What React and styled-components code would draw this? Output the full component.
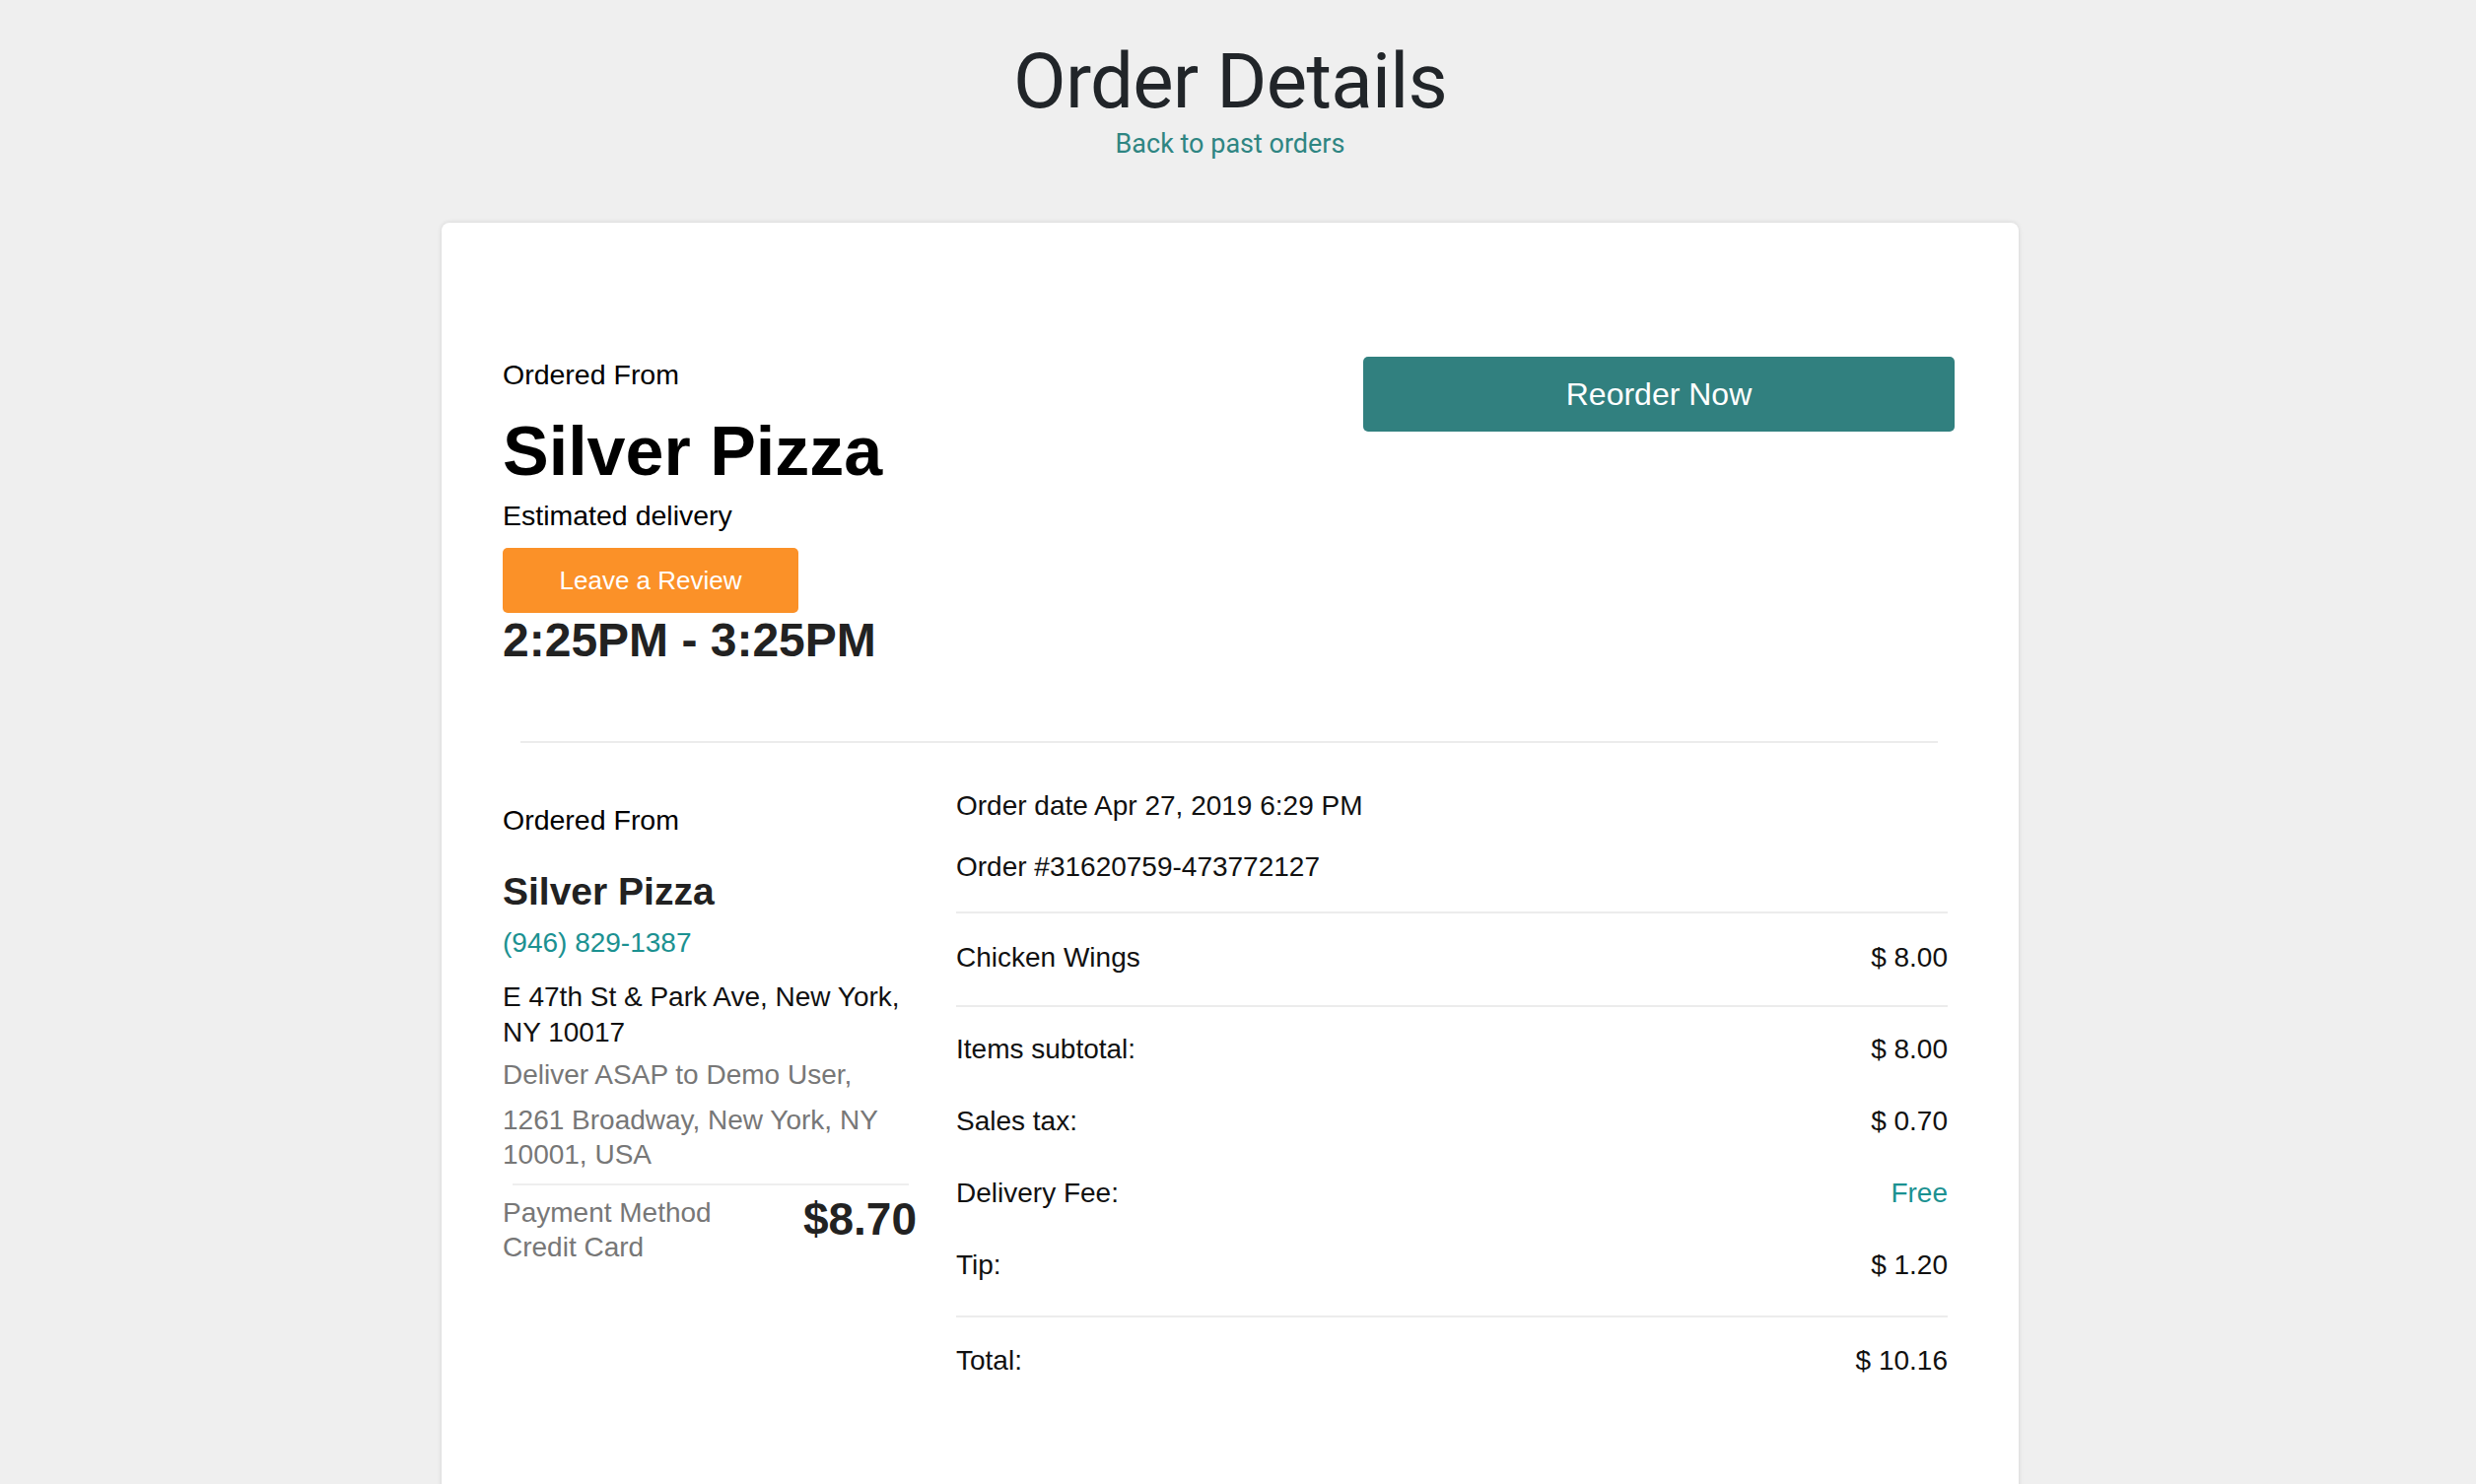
import React from 'react'
import styled, { createGlobalStyle } from 'styled-components'

const GlobalStyle = createGlobalStyle`
  body {
    margin: 0;
    background: #efefef;
    font-family: "Liberation Sans", Arial, sans-serif;
  }
`;

const summary = [
  { label: 'Items subtotal:', value: '$ 8.00' },
  { label: 'Sales tax:', value: '$ 0.70' },
  { label: 'Delivery Fee:', value: 'Free', free: true },
  { label: 'Tip:', value: '$ 1.20' },
];

export default function App() {
  return (
    <Page>
      <GlobalStyle />
      <Header>
        <Title>Order Details</Title>
        <BackLink href="#">Back to past orders</BackLink>
      </Header>
      <Card>
        <TopRow>
          <RestaurantInfo>
            <Label>Ordered From</Label>
            <RestaurantName>Silver Pizza</RestaurantName>
            <Label>Estimated delivery</Label>
            <ReviewButton>Leave a Review</ReviewButton>
            <DeliveryWindow>2:25PM - 3:25PM</DeliveryWindow>
          </RestaurantInfo>
          <ReorderButton>Reorder Now</ReorderButton>
        </TopRow>
        <Divider />
        <Details>
          <InfoColumn>
            <Label>Ordered From</Label>
            <SubName>Silver Pizza</SubName>
            <Phone>(946) 829-1387</Phone>
            <Address>E 47th St &amp; Park Ave, New York, NY 10017</Address>
            <Muted>Deliver ASAP to Demo User,</Muted>
            <MutedAddress>1261 Broadway, New York, NY 10001, USA</MutedAddress>
            <PaymentRule />
            <PaymentRow>
              <PaymentMethod>
                Payment Method
                <br />
                Credit Card
              </PaymentMethod>
              <PaymentTotal>$8.70</PaymentTotal>
            </PaymentRow>
          </InfoColumn>
          <ReceiptColumn>
            <MetaLine>Order date Apr 27, 2019 6:29 PM</MetaLine>
            <MetaLine>Order #31620759-473772127</MetaLine>
            <ItemRow>
              <span>Chicken Wings</span>
              <span>$ 8.00</span>
            </ItemRow>
            <Summary>
              {summary.map((row) => (
                <SummaryRow key={row.label}>
                  <span>{row.label}</span>
                  <Amount $free={row.free}>{row.value}</Amount>
                </SummaryRow>
              ))}
            </Summary>
            <TotalRow>
              <span>Total:</span>
              <span>$ 10.16</span>
            </TotalRow>
          </ReceiptColumn>
        </Details>
      </Card>
    </Page>
  )
}

const Page = styled.div`
  padding: 0 16px 0 0;
  min-height: 1506px;
  box-sizing: border-box;
`;

const Header = styled.header`
  display: flex;
  flex-direction: column;
  align-items: center;
  padding-top: 43px;
  margin-bottom: 64px;
  font-family: Roboto, "Liberation Sans", sans-serif;
`;

const Title = styled.h1`
  margin: 0;
  font-size: 78px;
  line-height: 80px;
  font-weight: 400;
  letter-spacing: -0.7px;
  color: #212529;
`;

const BackLink = styled.a`
  margin-top: 7px;
  font-size: 27px;
  line-height: 32px;
  color: #2e8582;
  text-decoration: none;
`;

const Card = styled.div`
  width: 1600px;
  margin: 0 auto;
  box-sizing: border-box;
  background: #fff;
  border-radius: 8px;
  box-shadow: 0 0 5px rgba(0, 0, 0, 0.12);
  padding: 136px 65px 120px 62px;
`;

const TopRow = styled.div`
  display: flex;
  justify-content: space-between;
  align-items: flex-start;
`;

const RestaurantInfo = styled.div`
  display: flex;
  flex-direction: column;
  align-items: flex-start;
  padding-top: 1px;
`;

const Label = styled.div`
  font-size: 28.5px;
  line-height: 34px;
  color: #000;
`;

const RestaurantName = styled.h2`
  margin: 21px 0 8px;
  font-size: 70px;
  line-height: 80px;
  font-weight: 700;
  color: #000;
`;

const ReviewButton = styled.button`
  margin-top: 16px;
  width: 300px;
  height: 66px;
  border: none;
  border-radius: 5px;
  background: #fb9128;
  color: #fff;
  font-family: inherit;
  font-size: 26px;
`;

const DeliveryWindow = styled.div`
  font-size: 48px;
  line-height: 56px;
  font-weight: 700;
  color: #222;
`;

const ReorderButton = styled.button`
  width: 600px;
  height: 76px;
  border: none;
  border-radius: 5px;
  background: #31807f;
  color: #fff;
  font-family: inherit;
  font-size: 32px;
`;

const Divider = styled.hr`
  margin: 74px 17px 0 18px;
  border: none;
  border-top: 2px solid #ececec;
`;

const Details = styled.div`
  display: flex;
  gap: 40px;
  align-items: flex-start;
`;

const InfoColumn = styled.div`
  width: 420px;
  flex-shrink: 0;
  padding-top: 61px;
`;

const SubName = styled.h3`
  margin: 33px 0 0;
  font-size: 39px;
  line-height: 46px;
  font-weight: 700;
  color: #222;
`;

const Phone = styled.div`
  margin-top: 12px;
  font-size: 28px;
  line-height: 34px;
  color: #1b9191;
`;

const Address = styled.div`
  margin-top: 20px;
  font-size: 28px;
  line-height: 36px;
  color: #111;
`;

const Muted = styled.div`
  margin-top: 7px;
  font-size: 28px;
  line-height: 36px;
  color: #777;
`;

const MutedAddress = styled(Muted)`
  margin-top: 10px;
  line-height: 35px;
`;

const PaymentRule = styled.hr`
  margin: 12px 8px 0 10px;
  border: none;
  border-top: 2px solid #eeeeee;
`;

const PaymentRow = styled.div`
  padding-top: 10px;
  display: flex;
  justify-content: space-between;
  align-items: flex-start;
`;

const PaymentMethod = styled.div`
  font-size: 28px;
  line-height: 35px;
  color: #777;
`;

const PaymentTotal = styled.div`
  font-size: 46px;
  line-height: 50px;
  font-weight: 700;
  color: #222;
  margin-top: -1px;
`;

const ReceiptColumn = styled.div`
  flex: 1;
  padding-top: 47px;
  padding-right: 7px;
  font-size: 28px;
  line-height: 34px;
  color: #111;
`;

const MetaLine = styled.div`
  margin-bottom: 28px;
`;

const ItemRow = styled.div`
  display: flex;
  justify-content: space-between;
  padding: 28px 0 31px;
  border-top: 2px solid #ececec;
  border-bottom: 2px solid #ececec;
`;

const Summary = styled.div`
  display: flex;
  flex-direction: column;
  gap: 39px;
  padding: 26px 0 34px;
  border-bottom: 2px solid #ececec;
`;

const SummaryRow = styled.div`
  display: flex;
  justify-content: space-between;
`;

const Amount = styled.span`
  color: ${(p) => (p.$free ? '#1b9191' : 'inherit')};
`;

const TotalRow = styled(SummaryRow)`
  padding-top: 27px;
`;
